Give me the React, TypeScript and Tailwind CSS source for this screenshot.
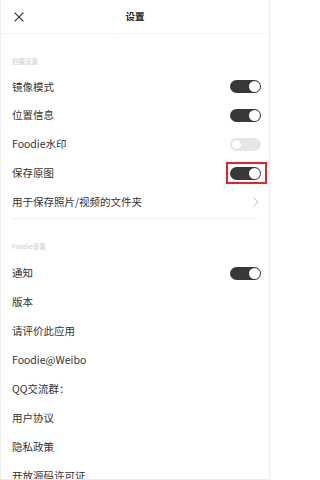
import React from "react";

const font = { fontFamily: '"Noto Sans CJK SC", "Noto Sans", sans-serif' };

function Toggle({ on, highlight }: { on: boolean; highlight?: boolean }) {
  return (
    <div className="relative w-[31px] h-[13px]">
      <div
        className={
          "w-full h-full rounded-full flex items-center px-[1px] " +
          (on ? "bg-[#383838] justify-end" : "bg-[#e6e6e6] justify-start")
        }
      >
        <div
          className={
            "w-[11px] h-[11px] rounded-full bg-white " +
            (on ? "" : "border border-[#e0e0e0]")
          }
        />
      </div>
      {highlight && (
        <div className="absolute -left-[4px] -right-[6px] -top-[5px] -bottom-[4px] border-2 border-[#e8212b]" />
      )}
    </div>
  );
}

function Row({
  label,
  h,
  right,
}: {
  label: string;
  h: "a" | "b";
  right?: React.ReactNode;
}) {
  return (
    <div
      className={
        "flex items-center justify-between pl-[11px] pr-[8px] " +
        (h === "a" ? "h-[28.75px]" : "h-[28.9px]")
      }
    >
      <span className="text-[10.5px] leading-none text-[#333333] whitespace-nowrap">
        {label}
      </span>
      {right}
    </div>
  );
}

export default function App() {
  return (
    <div
      className="w-[270px] h-[480px] bg-white overflow-hidden border-x border-b border-[#ececec]"
      style={font}
    >
      <div className="relative h-[34px] border-b border-[#f3f3f3] flex items-center justify-center">
        <svg
          className="absolute left-[13px] top-[12px]"
          width="10"
          height="10"
          viewBox="0 0 10 10"
        >
          <path d="M0.6 0.6 L9.4 9.4 M9.4 0.6 L0.6 9.4" stroke="#333" strokeWidth="1.2" />
        </svg>
        <span className="text-[9.5px] font-bold text-[#222] leading-none">设置</span>
      </div>

      <div className="h-[38.5px] pt-[22px] pl-[11px]">
        <div className="text-[6.5px] leading-[10px] text-[#c8c8c8]">拍摄设置</div>
      </div>
      <Row h="a" label="镜像模式" right={<Toggle on />} />
      <Row h="a" label="位置信息" right={<Toggle on />} />
      <Row h="a" label="Foodie水印" right={<Toggle on={false} />} />
      <Row h="a" label="保存原图" right={<Toggle on highlight />} />
      <Row
        h="a"
        label="用于保存照片/视频的文件夹"
        right={
          <svg width="6" height="10" viewBox="0 0 6 10" className="mr-[2px]">
            <path d="M0.8 0.8 L5 5 L0.8 9.2" fill="none" stroke="#bdbdbd" strokeWidth="1" />
          </svg>
        }
      />
      <div className="mx-[11px] mt-[1.5px] h-px bg-[#efefef]" />

      <div className="h-[40.5px] pt-[22px] pl-[11px]">
        <div className="text-[6.5px] leading-[10px] text-[#c8c8c8]">Foodie设置</div>
      </div>
      <Row h="b" label="通知" right={<Toggle on />} />
      <Row h="b" label="版本" />
      <Row h="b" label="请评价此应用" />
      <Row h="b" label="Foodie@Weibo" />
      <Row h="b" label="QQ交流群：" />
      <Row h="b" label="用户协议" />
      <Row h="b" label="隐私政策" />
      <Row h="b" label="开放源码许可证" />
    </div>
  );
}
